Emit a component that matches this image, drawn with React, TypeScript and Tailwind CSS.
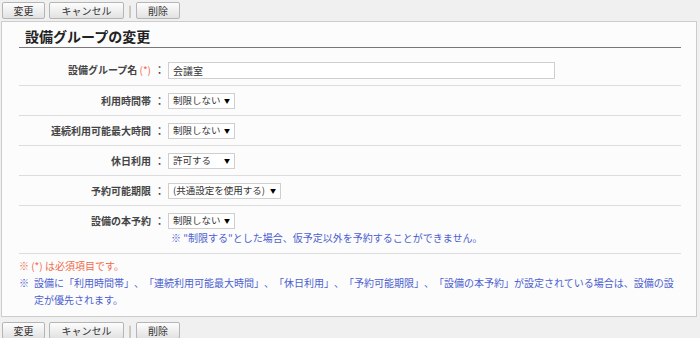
const FONT = "font-['Noto_Sans_CJK_JP','Noto_Sans',sans-serif] [text-spacing-trim:space-all]";

function Btn({ label, w }: { label: string; w: string }) {
  return (
    <button
      className={`${w} h-[17px] rounded-[2px] border border-[#b5b5b5] bg-gradient-to-b from-[#fdfdfd] to-[#e2e2e2] text-[10px] leading-[15px] text-[#333]`}
    >
      {label}
    </button>
  );
}

function ButtonBar() {
  return (
    <div className="flex h-[20px] items-center pl-[2px]">
      <Btn label="変更" w="w-[43px]" />
      <div className="w-[4px]" />
      <Btn label="キャンセル" w="w-[75px]" />
      <span className="w-[12px] text-center text-[11px] leading-none text-[#888]">|</span>
      <Btn label="削除" w="w-[44px]" />
    </div>
  );
}

function Select({ value, w }: { value: string; w: string }) {
  return (
    <div
      className={`${w} flex h-[16px] items-center justify-between whitespace-nowrap border border-[#cfcfcf] bg-white pl-[4px] pr-[4px] text-[9.5px] text-[#333]`}
    >
      <span className="leading-none">{value}</span>
      <span className="text-[6px] leading-none text-black">▼</span>
    </div>
  );
}

function Row({
  label,
  required,
  children,
  className = "",
}: {
  label: string;
  required?: boolean;
  children: React.ReactNode;
  className?: string;
}) {
  return (
    <div className={`flex items-start border-b border-[#dcdcdc] ${className}`}>
      <div className="flex h-[16px] items-center">
        <div className="w-[132px] whitespace-nowrap text-right text-[10px] font-bold leading-none text-[#444]">
          {label}
          {required && <span className="font-normal text-[#f06a4a]"> (*) </span>}
        </div>
        <div className="w-[17px] text-center text-[10px] font-bold leading-none text-[#444]">：</div>
      </div>
      <div>{children}</div>
    </div>
  );
}

export default function App() {
  return (
    <div className={`h-[338px] w-[700px] overflow-hidden bg-[#f0f0f0] ${FONT}`}>
      <ButtonBar />
      <div className="mb-[3px] ml-px mr-[3px] mt-px h-[296px] border border-[#cccccc] bg-[#fcfcfc] pl-[17px] pr-[15px]">
        <div className="border-b border-[#777] pb-[3px] pl-[6px] pt-[6px] text-[14px] font-bold leading-[16px] text-[#222]">
          設備グループの変更
        </div>

        <Row label="設備グループ名" required className="h-[38px] pt-[14px]">
          <div className="h-[17px] w-[387px] border border-[#cfcfcf] bg-white pl-[4px] text-[10px] leading-[15px] text-[#333]">
            会議室
          </div>
        </Row>
        <Row label="利用時間帯" className="h-[30px] pt-[7px]">
          <Select value="制限しない" w="w-[67px]" />
        </Row>
        <Row label="連続利用可能最大時間" className="h-[30px] pt-[7px]">
          <Select value="制限しない" w="w-[67px]" />
        </Row>
        <Row label="休日利用" className="h-[30px] pt-[7px]">
          <Select value="許可する" w="w-[67px]" />
        </Row>
        <Row label="予約可能期限" className="h-[30px] pt-[7px]">
          <Select value="(共通設定を使用する)" w="w-[113px]" />
        </Row>
        <Row label="設備の本予約" className="h-[48px] pt-[7px]">
          <Select value="制限しない" w="w-[67px]" />
          <div className="mt-[1px] pl-[3px] text-[10px] leading-[15px] text-[#4d5fd0]">
            ※ "制限する"とした場合、仮予定以外を予約することができません。
          </div>
        </Row>

        <div className="pt-[3px] text-[10px] leading-[17px]">
          <div className="text-[#f06a4a]">※ (*) は必須項目です。</div>
          <div className="flex text-[#4d5fd0]">
            <span className="w-[15px] shrink-0">※</span>
            <span>
              設備に「利用時間帯」、「連続利用可能最大時間」、「休日利用」、「予約可能期限」、「設備の本予約」が設定されている場合は、設備の設定が優先されます。
            </span>
          </div>
        </div>
      </div>
      <ButtonBar />
    </div>
  );
}
